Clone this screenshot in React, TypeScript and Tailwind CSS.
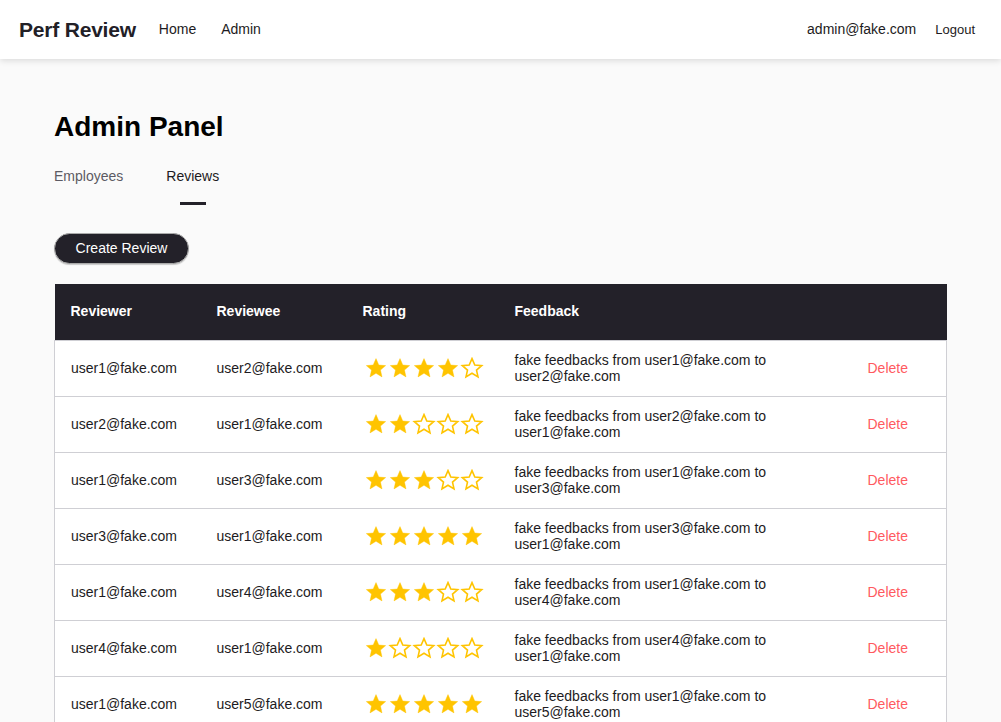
import React from "react";

type Review = {
  reviewer: string;
  reviewee: string;
  rating: number;
};

const reviews: Review[] = [
  { reviewer: "user1@fake.com", reviewee: "user2@fake.com", rating: 4 },
  { reviewer: "user2@fake.com", reviewee: "user1@fake.com", rating: 2 },
  { reviewer: "user1@fake.com", reviewee: "user3@fake.com", rating: 3 },
  { reviewer: "user3@fake.com", reviewee: "user1@fake.com", rating: 5 },
  { reviewer: "user1@fake.com", reviewee: "user4@fake.com", rating: 3 },
  { reviewer: "user4@fake.com", reviewee: "user1@fake.com", rating: 1 },
  { reviewer: "user1@fake.com", reviewee: "user5@fake.com", rating: 5 },
];

const Star = ({ filled }: { filled: boolean }) => (
  <svg width="24" height="22" viewBox="0 1 24 22" className="shrink-0">
    <path
      d="M12 2.6l2.8 6.4 6.9.6-5.2 4.5 1.5 6.8-6-3.6-6 3.6 1.5-6.8-5.2-4.5 6.9-.6z"
      fill={filled ? "#ffc400" : "none"}
      stroke="#ffc400"
      strokeWidth={filled ? 0.4 : 1.6}
      strokeLinejoin="miter"
    />
  </svg>
);

const Rating = ({ value }: { value: number }) => (
  <div className="flex items-center">
    {[1, 2, 3, 4, 5].map((i) => (
      <Star key={i} filled={i <= value} />
    ))}
  </div>
);

export default function App() {
  return (
    <div
      className="min-h-screen bg-[#fafafa] text-[#1d1b22]"
      style={{ fontFamily: '"Liberation Sans", Arial, sans-serif' }}
    >
      <header className="h-[59px] bg-white shadow-[0_2px_6px_rgba(0,0,0,0.12)] flex items-center justify-between pl-[19px] pr-[26px]">
        <div className="flex items-center">
          <span className="text-[21px] font-bold text-[#222027] tracking-[-0.2px]">
            Perf Review
          </span>
          <a className="ml-[23px] text-[14px]">Home</a>
          <a className="ml-[25px] text-[14px]">Admin</a>
        </div>
        <div className="flex items-center">
          <span className="text-[14px]">admin@fake.com</span>
          <button className="ml-[19px] text-[13px]">Logout</button>
        </div>
      </header>

      <main className="px-[54px]">
        <h1 className="pt-[51px] text-[28px] font-bold leading-[34px] text-black">
          Admin Panel
        </h1>
        <div className="mt-[22px] flex text-[14px]">
          <div className="text-[#5c5a63]">Employees</div>
          <div className="ml-[43px] flex flex-col items-center">
            <span>Reviews</span>
            <span className="mt-[15px] h-[3px] w-[26px] bg-[#232129]" />
          </div>
        </div>
        <button className="mt-[28px] h-[31px] w-[135px] rounded-full bg-[#232129] text-white text-[14px] font-medium border border-[#aaa] shadow-[0_1px_1px_rgba(0,0,0,0.2)]">
          Create Review
        </button>

        <table className="mt-[20px] w-[893px] border-collapse text-[14px] table-fixed">
          <colgroup>
            <col className="w-[146px]" />
            <col className="w-[146px]" />
            <col className="w-[152px]" />
            <col className="w-[353px]" />
            <col />
          </colgroup>
          <thead>
            <tr className="h-[56px] bg-[#232129] text-white text-left">
              <th className="pl-[16px] font-bold">Reviewer</th>
              <th className="pl-[16px] font-bold">Reviewee</th>
              <th className="pl-[16px] font-bold">Rating</th>
              <th className="pl-[16px] font-bold">Feedback</th>
              <th />
            </tr>
          </thead>
          <tbody className="bg-white">
            {reviews.map((r, i) => (
              <tr key={i} className="h-[56px] border border-[#cfcfd4]">
                <td className="pl-[16px]">{r.reviewer}</td>
                <td className="pl-[16px]">{r.reviewee}</td>
                <td className="pl-[17px]">
                  <Rating value={r.rating} />
                </td>
                <td className="pl-[16px] pr-[20px] leading-[16px]">
                  fake feedbacks from {r.reviewer} to {r.reviewee}
                </td>
                <td className="pl-[16px] text-[#ff5a5f]">Delete</td>
              </tr>
            ))}
          </tbody>
        </table>
      </main>
    </div>
  );
}
